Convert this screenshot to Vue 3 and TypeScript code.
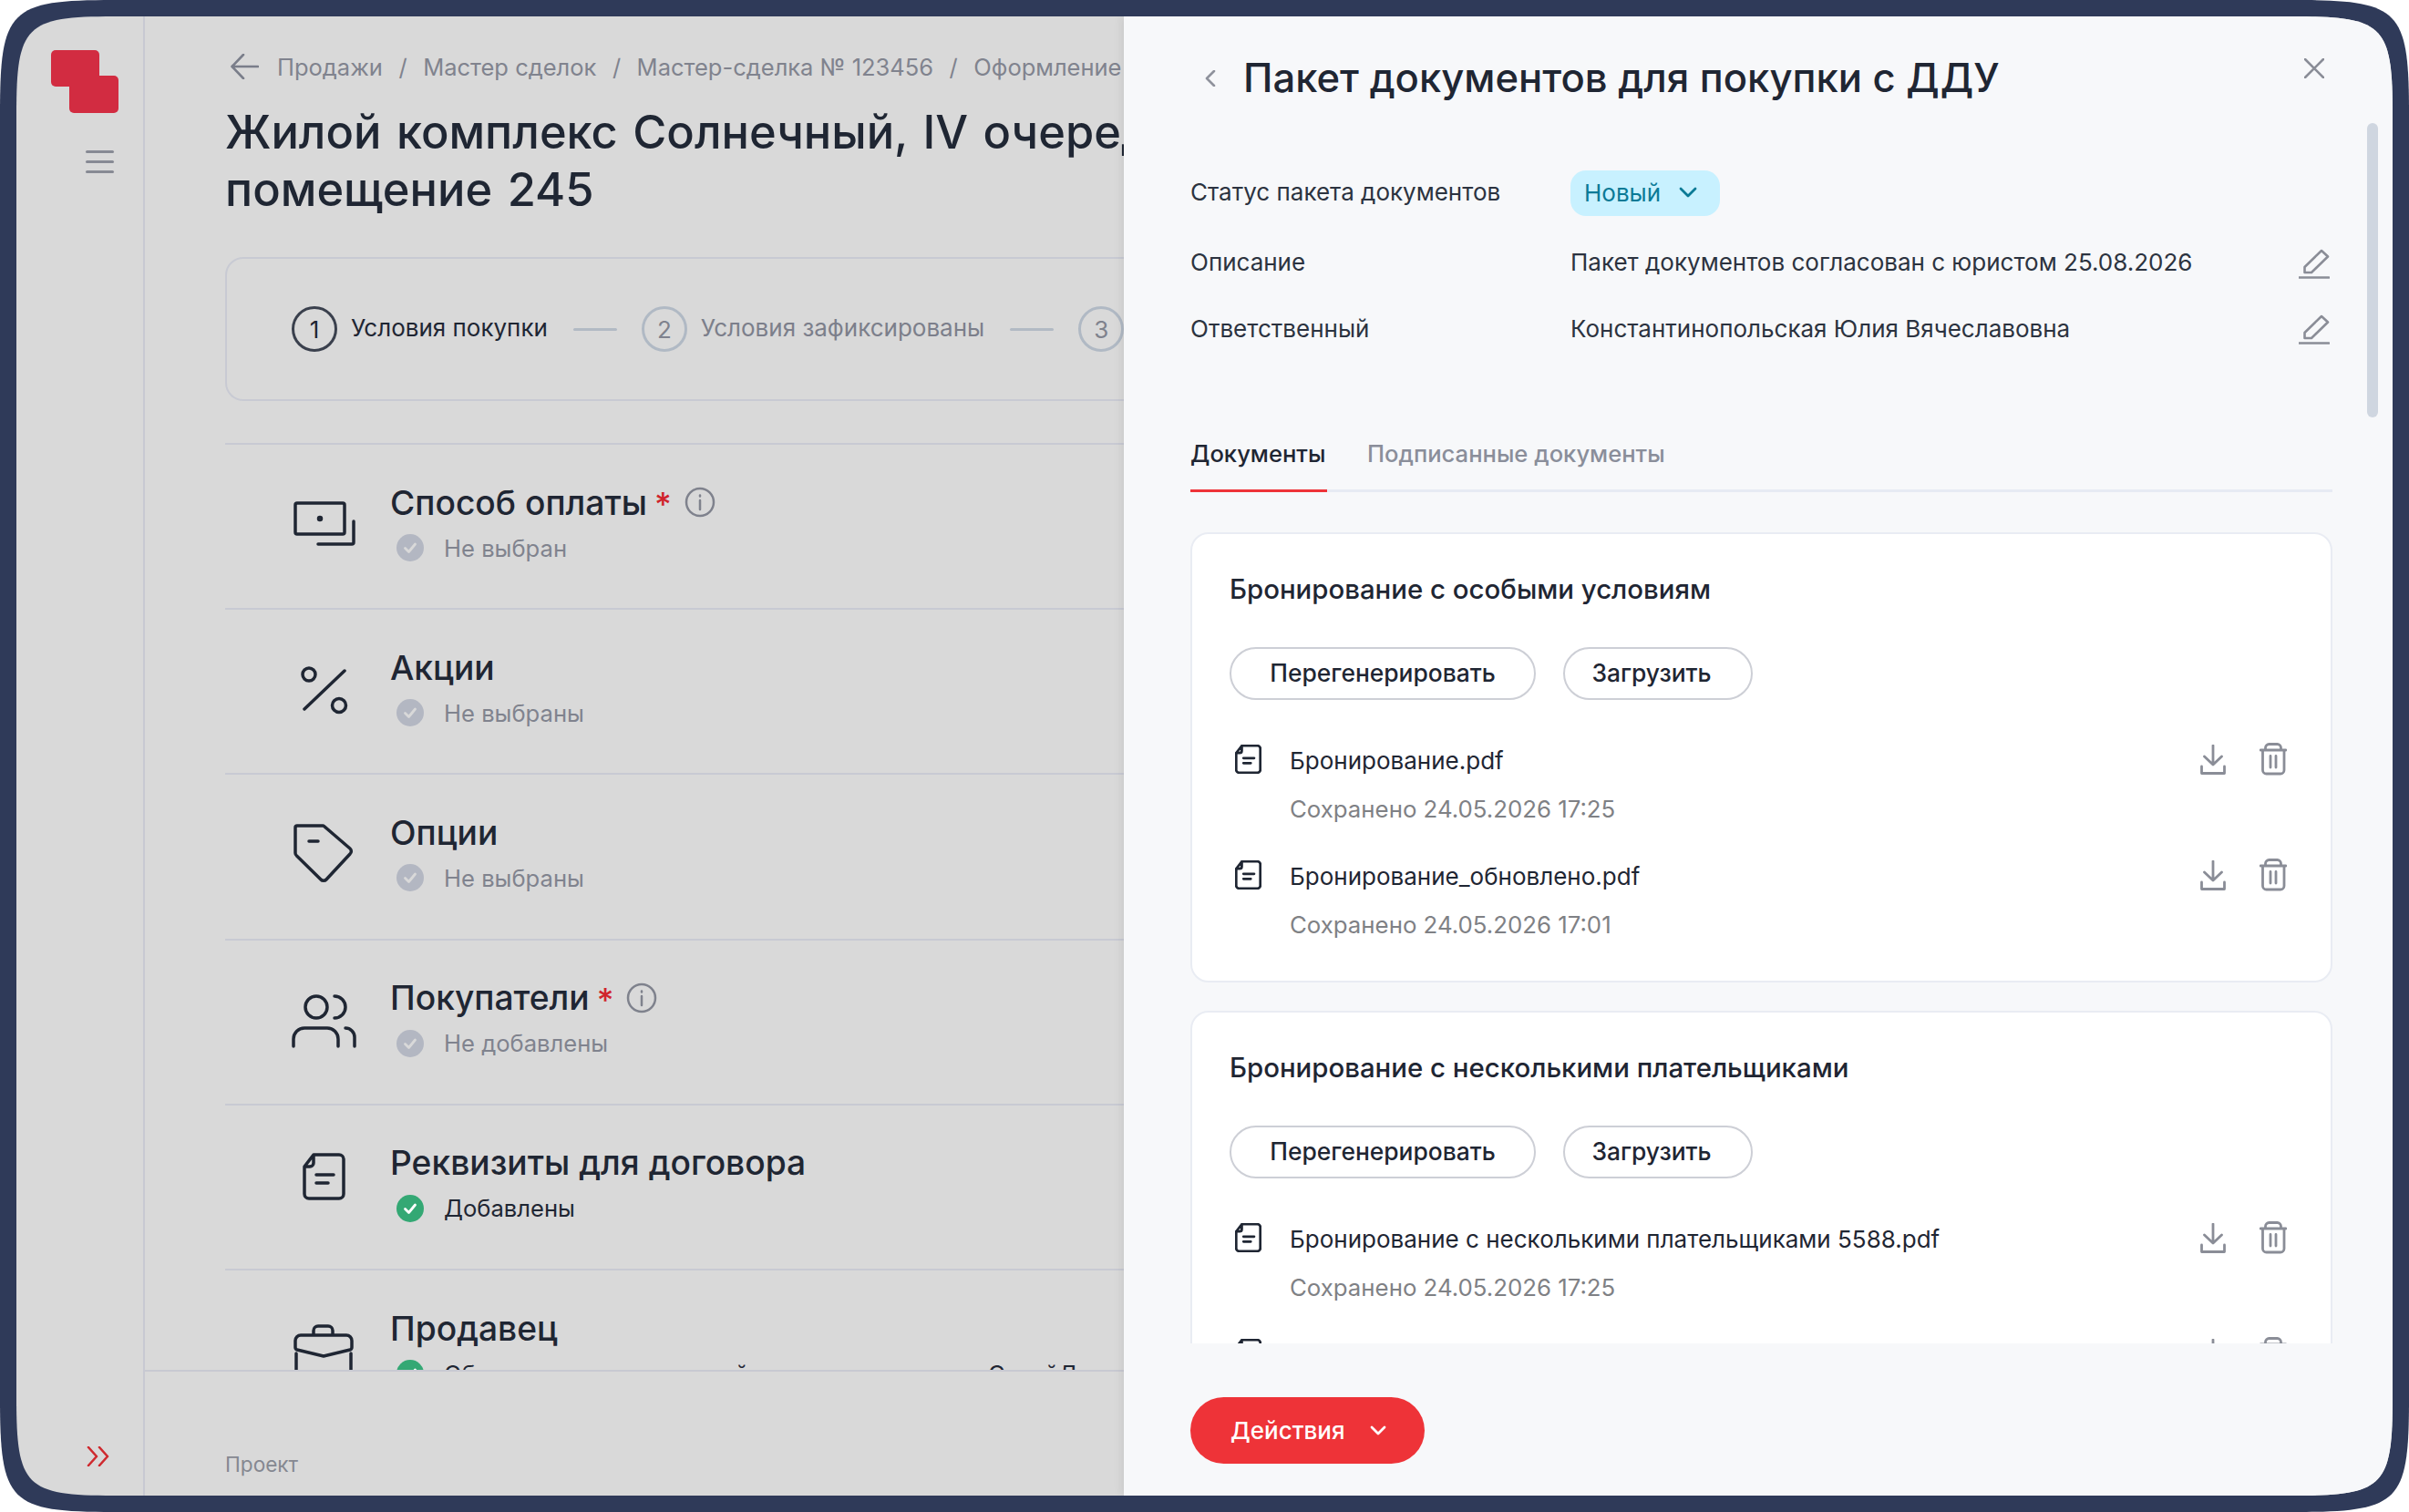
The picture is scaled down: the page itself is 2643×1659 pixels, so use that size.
<script setup lang="ts">
interface Section {
  title: string
  status: string
  icon: string
  required?: boolean
  done?: boolean
}
interface DocFile {
  name: string
  saved: string
}
interface DocGroup {
  title: string
  files: DocFile[]
}

const icons: Record<string, string> = {
  pay: 'M6 12H56a2 2 0 0 1 2 2V44a2 2 0 0 1-2 2H6a2 2 0 0 1-2-2V14a2 2 0 0 1 2-2Z M31 27.5a1.5 1.5 0 1 0 0 3a1.5 1.5 0 1 0 0-3Z M68 32V55a2 2 0 0 1-2 2H29',
  percent: 'M19 12a7 7 0 1 0 0 14a7 7 0 1 0 0-14Z M52 45.5a7.5 7.5 0 1 0 0 15a7.5 7.5 0 1 0 0-15Z M14 57L58 15',
  tag: 'M4 6a2 2 0 0 1 2-2H34a2 2 0 0 1 1.5.5L64 29a4 4 0 0 1 0 6L38 63a4 4 0 0 1-6 0L5.5 37a4 4 0 0 1-1.5-3Z M19 21H29',
  users: 'M27 9a12 12 0 1 0 0 24a12 12 0 1 0 0-24Z M47 9a12 12 0 0 1 0 24 M2 64V56a12 12 0 0 1 12-12H39a12 12 0 0 1 12 12V64 M59 44a10 10 0 0 1 10 10V64',
  doc: 'M24 2H52a5 5 0 0 1 5 5V45a5 5 0 0 1-5 5H19a5 5 0 0 1-5-5V15Z M24 2V11a4 4 0 0 1-4 4H14 M27 24H46 M27 33H40',
  bag: 'M24 19V14a5 5 0 0 1 5-5H40a5 5 0 0 1 5 5V19 M10 19H60a6 6 0 0 1 6 6V32a3 3 0 0 1-2 3L35 42L6 35a3 3 0 0 1-2-3V25a6 6 0 0 1 6-6Z M5 39V90 M65 39V90',
}

const crumbs = ['Продажи', 'Мастер сделок', 'Мастер-сделка № 123456', 'Оформление сделки']

const sections: Section[] = [
  { title: 'Способ оплаты', status: 'Не выбран', icon: 'pay', required: true },
  { title: 'Акции', status: 'Не выбраны', icon: 'percent' },
  { title: 'Опции', status: 'Не выбраны', icon: 'tag' },
  { title: 'Покупатели', status: 'Не добавлены', icon: 'users', required: true },
  { title: 'Реквизиты для договора', status: 'Добавлены', icon: 'doc', done: true },
  { title: 'Продавец', status: 'Общество с ограниченной ответственностью «СтройДом»', icon: 'bag', done: true },
]

const groups: DocGroup[] = [
  {
    title: 'Бронирование с особыми условиям',
    files: [
      { name: 'Бронирование.pdf', saved: 'Сохранено 24.05.2026 17:25' },
      { name: 'Бронирование_обновлено.pdf', saved: 'Сохранено 24.05.2026 17:01' },
    ],
  },
  {
    title: 'Бронирование с несколькими плательщиками',
    files: [
      { name: 'Бронирование с несколькими плательщиками 5588.pdf', saved: 'Сохранено 24.05.2026 17:25' },
      { name: 'Бронирование_обновлено.pdf', saved: 'Сохранено 24.05.2026 17:01' },
    ],
  },
]
</script>

<template>
  <div class="device">
    <div class="screen">
      <aside class="sidebar">
        <svg class="logo" width="74" height="69" viewBox="0 0 74 69">
          <rect x="0" y="0" width="53" height="40" rx="5" />
          <rect x="20" y="28" width="54" height="41" rx="5" />
          <rect x="20" y="20" width="33" height="28" />
        </svg>
        <div class="burger"><i></i><i></i><i></i></div>
        <svg class="expand" width="25" height="22" viewBox="0 0 25 22">
          <path d="M2 1L11 11L2 21M14 1L23 11L14 21" />
        </svg>
      </aside>

      <main class="main">
        <div class="content">
          <nav class="crumbs">
            <svg class="crumb-back" width="31" height="28" viewBox="0 0 31 28">
              <path d="M14 1L1.5 14L14 27M1.5 14H30" />
            </svg>
            <template v-for="(c, i) in crumbs" :key="c">
              <span v-if="i > 0" class="crumb-sep">/</span>
              <span>{{ c }}</span>
            </template>
          </nav>
          <h1 class="page-title">Жилой комплекс Солнечный, IV очередь,<br />помещение 245</h1>

          <div class="stepper">
            <span class="step-num">1</span>
            <span class="step-text">Условия покупки</span>
            <span class="step-line"></span>
            <span class="step-num off">2</span>
            <span class="step-text off">Условия зафиксированы</span>
            <span class="step-line"></span>
            <span class="step-num off">3</span>
            <span class="step-text off">Оформление</span>
          </div>

          <section v-for="s in sections" :key="s.title" class="section">
            <svg class="section-icon" width="72" height="72" viewBox="0 0 72 72">
              <path :d="icons[s.icon]" />
            </svg>
            <div>
              <div class="section-title">
                {{ s.title }}
                <template v-if="s.required">
                  <span class="star">*</span>
                  <svg class="info" width="34" height="34" viewBox="0 0 34 34">
                    <circle cx="17" cy="17" r="15" />
                    <path d="M17 15V25M17 9.5V10.5" />
                  </svg>
                </template>
              </div>
              <div class="section-status" :class="{ done: s.done }">
                <svg class="check" width="30" height="30" viewBox="0 0 30 30">
                  <circle cx="15" cy="15" r="15" />
                  <path d="M9.5 15.5L13.5 19.5L20.5 11" />
                </svg>
                {{ s.status }}
              </div>
            </div>
          </section>
        </div>
        <footer class="main-foot">Проект</footer>
      </main>

      <div class="drawer">
        <div class="drawer-scroll">
          <header class="drawer-head">
            <svg class="drawer-back" width="12" height="18" viewBox="0 0 12 18">
              <path d="M10 1L2 9L10 17" />
            </svg>
            <h2 class="drawer-title">Пакет документов для покупки с ДДУ</h2>
            <svg class="close" width="22" height="22" viewBox="0 0 22 22">
              <path d="M1 1L21 21M21 1L1 21" />
            </svg>
          </header>

          <div class="meta">
            <div class="meta-label">Статус пакета документов</div>
            <div class="meta-value status-value">
              <span class="badge">
                Новый
                <svg width="20" height="12" viewBox="0 0 20 12"><path d="M2 2L10 10L18 2" /></svg>
              </span>
            </div>
            <div class="meta-label">Описание</div>
            <div class="meta-value">
              Пакет документов согласован с юристом 25.08.2026
              <svg class="pencil" width="34" height="34" viewBox="0 0 34 34">
                <path d="M6.5 26V20L25 2L32 8.5L14 26Z M0 31.5H33" />
              </svg>
            </div>
            <div class="meta-label">Ответственный</div>
            <div class="meta-value">
              Константинопольская Юлия Вячеславовна
              <svg class="pencil" width="34" height="34" viewBox="0 0 34 34">
                <path d="M6.5 26V20L25 2L32 8.5L14 26Z M0 31.5H33" />
              </svg>
            </div>
          </div>

          <div class="tabs">
            <span class="tab active">Документы</span>
            <span class="tab">Подписанные документы</span>
          </div>

          <article v-for="g in groups" :key="g.title" class="card">
            <h3 class="card-title">{{ g.title }}</h3>
            <div class="card-buttons">
              <button class="btn wide">Перегенерировать</button>
              <button class="btn">Загрузить</button>
            </div>
            <div v-for="f in g.files" :key="f.name" class="file">
              <svg class="file-icon" width="29" height="32" viewBox="12 0 47 52">
                <path :d="icons.doc" />
              </svg>
              <div class="file-text">
                <div class="file-name">{{ f.name }}</div>
                <div class="file-saved">{{ f.saved }}</div>
              </div>
              <svg class="file-action" width="28" height="33" viewBox="0 0 28 33">
                <path d="M14 1V21M4.5 13L14 22L23.5 13M1.5 24V31.5H26.5V24" />
              </svg>
              <svg class="file-action trash" width="30" height="36" viewBox="0 0 30 36">
                <path d="M1 8H29M6.5 8V5.5a4 4 0 0 1 4-4H19.5a4 4 0 0 1 4 4V8M3.5 8V30a4 4 0 0 0 4 4H23a4 4 0 0 0 4-4V8M12 14.5V27M18 14.5V27" />
              </svg>
            </div>
          </article>
        </div>

        <div class="scrollbar"></div>

        <div class="drawer-foot">
          <button class="actions">
            Действия
            <svg width="18" height="11" viewBox="0 0 18 11"><path d="M2 2L9 9L16 2" /></svg>
          </button>
        </div>
      </div>
    </div>
  </div>
</template>

<style>
html, body {
  margin: 0;
  background: #fff;
}
</style>

<style scoped>
.device {
  box-sizing: border-box;
  width: 2643px;
  height: 1659px;
  padding: 18px;
  background: #2f3a59;
  clip-path: path("M0 125C0 10 10 0 125 0H2518C2633 0 2643 10 2643 125V1534C2643 1649 2633 1659 2518 1659H125C10 1659 0 1649 0 1534Z");
  font-family: Inter, "Noto Sans", sans-serif;
  color: #1f2633;
}
.screen {
  position: relative;
  display: flex;
  height: 100%;
  overflow: hidden;
  clip-path: path("M0 107C0 10 10 0 107 0H2500C2597 0 2607 10 2607 107V1516C2607 1613 2597 1623 2500 1623H107C10 1623 0 1613 0 1516Z");
  background: #d9d9d9;
}
svg {
  flex: none;
  fill: none;
  stroke-linecap: round;
  stroke-linejoin: round;
}

/* sidebar */
.sidebar {
  box-sizing: border-box;
  flex: none;
  display: flex;
  flex-direction: column;
  width: 141px;
  padding: 37px 0 32px 38px;
  border-right: 2px solid #c8c9d2;
}
.logo {
  fill: #d22c41;
}
.burger {
  display: flex;
  flex-direction: column;
  gap: 8px;
  width: 31px;
  margin: 41px 0 0 38px;
}
.burger i {
  display: block;
  height: 3px;
  border-radius: 2px;
  background: #878a94;
}
.expand {
  margin: auto 0 0 39px;
  stroke: #cf2a2f;
  stroke-width: 2.6;
}

/* main column */
.main {
  flex: 1;
  min-width: 0;
  display: flex;
  flex-direction: column;
}
.content {
  flex: 1;
  min-height: 0;
  overflow: hidden;
  padding: 35px 0 0 88px;
}
.crumbs {
  display: flex;
  align-items: center;
  height: 40px;
  padding-left: 6px;
  font-size: 25.5px;
  color: #80838e;
  white-space: nowrap;
}
.crumb-back {
  margin-right: 20px;
  stroke: #7a7e8a;
  stroke-width: 2.6;
}
.crumb-sep {
  margin: 0 17.5px;
}
.page-title {
  margin: 20px 0 0;
  font-size: 50.6px;
  font-weight: 500;
  line-height: 63px;
  word-spacing: 3px;
  white-space: nowrap;
}
.stepper {
  box-sizing: border-box;
  display: flex;
  align-items: center;
  width: 1500px;
  height: 158px;
  margin-top: 43px;
  padding-left: 71px;
  border: 2px solid #c8cad3;
  border-radius: 20px;
  font-size: 26px;
  white-space: nowrap;
}
.step-num {
  box-sizing: border-box;
  flex: none;
  display: flex;
  align-items: center;
  justify-content: center;
  width: 50px;
  height: 50px;
  border: 3px solid #3a404d;
  border-radius: 50%;
}
.step-num.off {
  border-color: #b0b9c4;
  color: #7f828d;
}
.step-text {
  margin-left: 15px;
  padding-bottom: 3px;
}
.step-text.off {
  color: #7c7f8b;
}
.step-line {
  width: 48px;
  height: 3px;
  margin: 0 27px 0 28px;
  border-radius: 2px;
  background: #b2bac4;
}
.section {
  box-sizing: border-box;
  display: flex;
  align-items: center;
  gap: 36px;
  width: 1400px;
  height: 181.2px;
  padding: 0 0 3px 73px;
  border-top: 2px solid #c8cad3;
}
.section:first-of-type {
  margin-top: 46px;
}
.section-icon {
  overflow: visible;
  stroke: #1f2633;
  stroke-width: 3.5;
}
.section-title {
  display: flex;
  align-items: center;
  height: 50px;
  font-size: 37.2px;
  font-weight: 500;
  white-space: nowrap;
}
.star {
  margin: 4px 0 0 8px;
  color: #d0242c;
  font-size: 36px;
}
.info {
  margin-left: 14px;
  stroke: #7f828d;
  stroke-width: 2.5;
}
.section-status {
  display: flex;
  align-items: center;
  gap: 22px;
  height: 50px;
  margin-left: 7px;
  font-size: 25.6px;
  color: #80838e;
  white-space: nowrap;
}
.section-status.done {
  color: #1f2633;
}
.check circle {
  fill: #b3b7c2;
}
.check path {
  stroke: #d9d9d9;
  stroke-width: 2.8;
}
.done .check circle {
  fill: #34a874;
}
.done .check path {
  stroke: #fff;
}
.main-foot {
  flex: none;
  box-sizing: border-box;
  height: 138px;
  padding: 84px 0 0 88px;
  border-top: 2px solid #c8c9d2;
  font-size: 22.6px;
  line-height: 36px;
  color: #858891;
}

/* drawer */
.drawer {
  position: absolute;
  top: 0;
  right: 0;
  bottom: 0;
  display: flex;
  flex-direction: column;
  width: 1392px;
  background: #f7f8fa;
  box-shadow: -2px 0 10px rgba(0, 0, 0, 0.08);
}
.drawer-scroll {
  flex: none;
  box-sizing: border-box;
  height: 1456px;
  overflow: hidden;
  padding: 38px 66px 0 73px;
}
.drawer-head {
  display: flex;
  align-items: center;
  height: 60px;
}
.drawer-back {
  margin-left: 16px;
  stroke: #8f929c;
  stroke-width: 2.6;
}
.drawer-title {
  flex: 1;
  margin: 0 0 0 30px;
  padding-bottom: 2px;
  font-size: 43.6px;
  font-weight: 500;
  white-space: nowrap;
}
.close {
  margin: -22px 9px 0 0;
  stroke: #8a8d97;
  stroke-width: 2.6;
}
.meta {
  display: grid;
  grid-template-columns: 417px 1fr;
  row-gap: 32.5px;
  margin-top: 71px;
  font-size: 26px;
  color: #2c3340;
}
.meta-label,
.meta-value {
  box-sizing: border-box;
  display: flex;
  align-items: center;
  min-height: 40px;
  padding-bottom: 4px;
}
.meta-value {
  position: relative;
}
.meta-value.status-value {
  padding-bottom: 0;
}
.badge {
  display: flex;
  align-items: center;
  gap: 20px;
  box-sizing: border-box;
  height: 50px;
  padding: 0 25px 2px 15px;
  border-radius: 17px;
  background: #c8f1ff;
  color: #0a7a96;
}
.badge svg {
  stroke: #0a7a96;
  stroke-width: 2.8;
}
.pencil {
  position: absolute;
  top: 3px;
  right: 3px;
  stroke: #8a8d97;
  stroke-width: 2.6;
}
.tabs {
  display: flex;
  gap: 44px;
  margin-top: 96px;
  border-bottom: 3px solid #e7ebf3;
  font-size: 25.6px;
  font-weight: 500;
}
.tab {
  margin-bottom: -3px;
  padding-bottom: 19px;
  border-bottom: 3px solid transparent;
  line-height: 40px;
  color: #8a8e9a;
}
.tab.active {
  width: 150px;
  border-bottom-color: #ee3338;
  color: #1f2633;
}
.card {
  box-sizing: border-box;
  height: 494px;
  margin-top: 44px;
  padding: 41px 48px 0 41px;
  border: 2px solid #e9ecf3;
  border-radius: 20px;
  background: #fff;
}
.card + .card {
  margin-top: 31px;
}
.card-title {
  margin: 0;
  font-size: 29.4px;
  font-weight: 500;
  line-height: 40px;
}
.card-buttons {
  display: flex;
  gap: 30px;
  margin-top: 43px;
}
.btn {
  box-sizing: border-box;
  width: 208px;
  height: 58px;
  padding: 0 14px 3px 0;
  border: 2px solid #cdcfd6;
  border-radius: 29px;
  background: #fff;
  font: 500 26.4px Inter, "Noto Sans", sans-serif;
  color: #1f2633;
}
.btn.wide {
  width: 336px;
  padding-right: 0;
}
.file {
  display: flex;
  align-items: flex-start;
  margin-top: 36px;
}
.card-buttons + .file {
  margin-top: 47px;
}
.file-icon {
  margin: 2px 31px 0 6px;
  stroke: #1f2633;
  stroke-width: 4.5;
}
.file-text {
  flex: 1;
  min-width: 0;
  font-size: 26px;
  line-height: 36px;
}
.file-name {
  padding-top: 2px;
}
.file-saved {
  margin-top: 17px;
  font-size: 25.8px;
  color: #7f8185;
}
.file-action {
  margin-top: 2px;
  stroke: #8a8d97;
  stroke-width: 2.8;
}
.trash {
  margin: 0 0 0 37px;
}
.scrollbar {
  position: absolute;
  top: 117px;
  right: 16px;
  width: 12px;
  height: 323px;
  border-radius: 6px;
  background: #cfd6e0;
}
.drawer-foot {
  padding: 59px 0 0 73px;
}
.actions {
  display: flex;
  align-items: center;
  gap: 27px;
  height: 73px;
  padding: 0 42px 0 44px;
  border: 0;
  border-radius: 37px;
  background: #ee3338;
  font: 500 26px Inter, "Noto Sans", sans-serif;
  color: #fff;
}
.actions svg {
  stroke: #fff;
  stroke-width: 2.8;
}
</style>
